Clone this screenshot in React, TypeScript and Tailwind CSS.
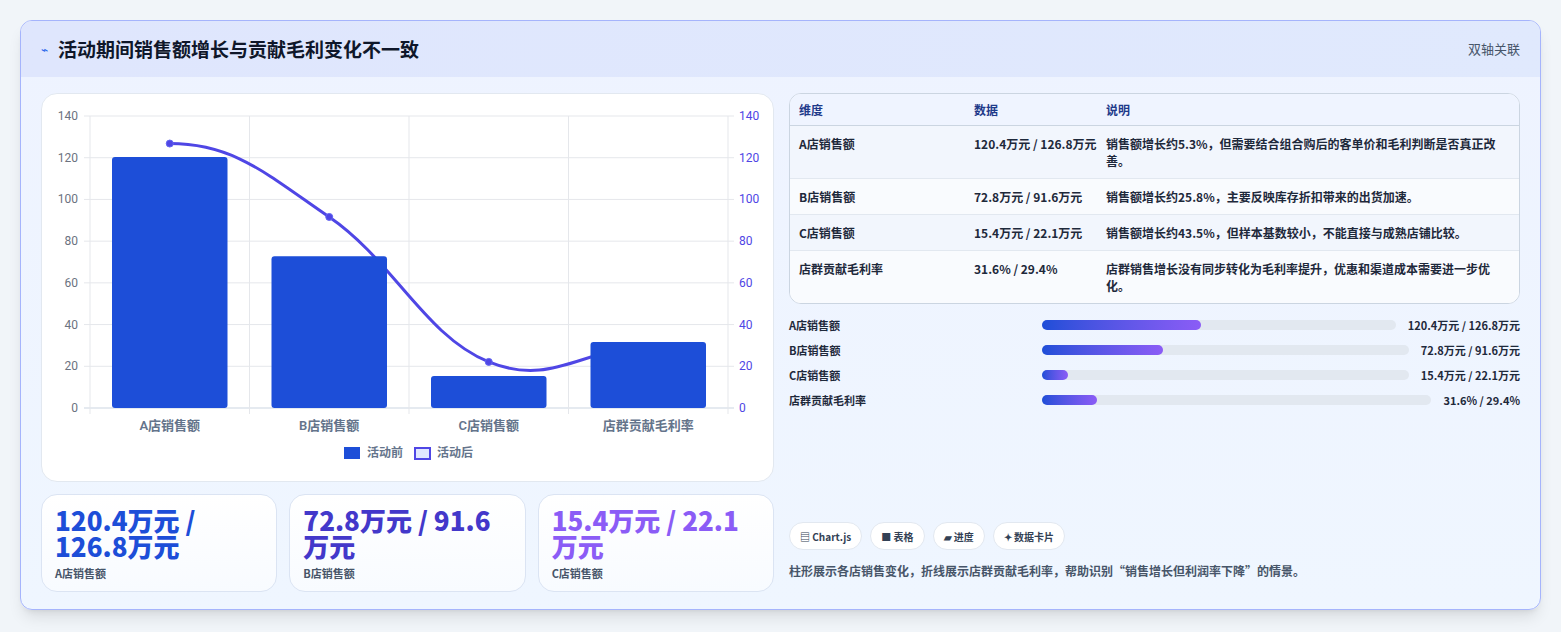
import React from 'react';

const cats = ['A店销售额', 'B店销售额', 'C店销售额', '店群贡献毛利率'];
const before = [120.4, 72.8, 15.4, 31.6];
const after = [126.8, 91.6, 22.1, 29.4];

const rows = [
  ['A店销售额', '120.4万元 / 126.8万元', '销售额增长约5.3%，但需要结合组合购后的客单价和毛利判断是否真正改善。'],
  ['B店销售额', '72.8万元 / 91.6万元', '销售额增长约25.8%，主要反映库存折扣带来的出货加速。'],
  ['C店销售额', '15.4万元 / 22.1万元', '销售额增长约43.5%，但样本基数较小，不能直接与成熟店铺比较。'],
  ['店群贡献毛利率', '31.6% / 29.4%', '店群销售增长没有同步转化为毛利率提升，优惠和渠道成本需要进一步优化。'],
];

const progress = [
  ['A店销售额', '120.4万元 / 126.8万元', 45],
  ['B店销售额', '72.8万元 / 91.6万元', 33],
  ['C店销售额', '15.4万元 / 22.1万元', 7],
  ['店群贡献毛利率', '31.6% / 29.4%', 14],
] as const;

const Chart = () => {
  const x0 = 48, x1 = 686, y0 = 22, y1 = 314;
  const cw = (x1 - x0) / 4;
  const y = (v: number) => y1 - (v / 140) * (y1 - y0);
  const pts = after.map((v, i) => [x0 + cw * (i + 0.5), y(v)]);
  let d = `M${pts[0][0]},${pts[0][1]}`;
  for (let i = 0; i < pts.length - 1; i++) {
    const [ax, ay] = pts[i];
    const [bx, by] = pts[i + 1];
    const dx = (bx - ax) * 0.4;
    const s0 = i === 0 ? 0 : (by - pts[i - 1][1]) / 2 * 0.4;
    const s1 = i + 2 < pts.length ? (pts[i + 2][1] - ay) / 2 * 0.4 : 0;
    d += ` C${ax + dx},${ay + s0} ${bx - dx},${by - s1} ${bx},${by}`;
  }
  const ticks = [0, 20, 40, 60, 80, 100, 120, 140];
  return (
    <svg width="733" height="388" className="block" style={{ fontFamily: 'Roboto, "Noto Sans CJK SC", sans-serif' }}>
      {ticks.map((t) => (
        <g key={t}>
          <line x1={x0 - 6} x2={x1 + 6} y1={y(t)} y2={y(t)} stroke={t === 0 ? '#cbd5e1' : '#e5e7eb'} />
          <text x={x0 - 12} y={y(t) + 4} textAnchor="end" fontSize="12" fill="#6b7280">{t}</text>
          <text x={x1 + 11} y={y(t) + 4} fontSize="12" fill="#4f46e5">{t}</text>
        </g>
      ))}
      {[0, 1, 2, 3, 4].map((i) => (
        <line key={i} x1={x0 + cw * i} x2={x0 + cw * i} y1={y0} y2={y1 + 6} stroke="#e5e7eb" />
      ))}
      <path d={d} fill="none" stroke="#4f46e5" strokeWidth="3" />
      {pts.map(([px, py], i) => (
        <circle key={i} cx={px} cy={py} r="3.5" fill="#4f46e5" stroke="#6366f1" strokeWidth="1" />
      ))}
      {before.map((v, i) => (
        <rect key={i} x={x0 + cw * i + 22} y={y(v)} width={cw - 44} height={y1 - y(v)} rx="3" fill="#1d4ed8" />
      ))}
      {cats.map((c, i) => (
        <text key={c} x={x0 + cw * (i + 0.5)} y={336} textAnchor="middle" fontSize="13" fontWeight="600" fill="#64748b">{c}</text>
      ))}
      <rect x="302" y="353" width="16" height="12" fill="#1d4ed8" />
      <text x="325" y="363" fontSize="12" fontWeight="600" fill="#64748b">活动前</text>
      <rect x="373" y="354" width="15" height="11" fill="#e0e7ff" stroke="#4f46e5" strokeWidth="2" />
      <text x="395" y="363" fontSize="12" fontWeight="600" fill="#64748b">活动后</text>
    </svg>
  );
};

export default function App() {
  return (
    <div className="w-[1561px] h-[632px] bg-[#f1f5f9] p-5 pb-0" style={{ fontFamily: '"Noto Sans CJK SC", "Noto Sans", sans-serif' }}>
      <div className="h-[590px] rounded-xl border border-[#a5b4fc] bg-gradient-to-b from-[#eef3ff] to-[#eff6ff] overflow-hidden shadow-lg">
        <div className="h-[56px] flex items-center justify-between px-5 bg-gradient-to-r from-[#dfe6fd] to-[#e0e9fd]">
          <div className="flex items-center gap-2.5">
            <span className="text-[#2563eb] text-xs">⌁</span>
            <span className="text-[19px] font-bold text-[#0f172a]">活动期间销售额增长与贡献毛利变化不一致</span>
          </div>
          <span className="text-[13px] text-[#475569]">双轴关联</span>
        </div>
        <div className="flex gap-[15px] px-5 pt-[16px]">
          <div className="w-[733px] flex flex-col gap-3">
            <div className="h-[389px] rounded-2xl bg-white border border-[#e2e8f0]"><Chart /></div>
            <div className="grid grid-cols-3 gap-3">
              {[
                ['120.4万元 / 126.8万元', 'A店销售额', 'text-[#1d4ed8]'],
                ['72.8万元 / 91.6万元', 'B店销售额', 'text-[#4338ca]'],
                ['15.4万元 / 22.1万元', 'C店销售额', 'text-[#8b5cf6]'],
              ].map(([v, l, c]) => (
                <div key={l} className="h-[98px] rounded-2xl bg-gradient-to-b from-white to-[#f8fbff] border border-[#dbe4f3] px-[13px] pt-[12px]">
                  <div className={`text-[26px] leading-[26px] font-extrabold pr-3 ${c}`}>{v}</div>
                  <div className="text-[11px] font-semibold text-[#475569] mt-[6px]">{l}</div>
                </div>
              ))}
            </div>
          </div>
          <div className="w-[733px] flex flex-col">
            <div className="rounded-xl border border-[#cbd5e1] bg-white overflow-hidden text-[12px] font-semibold text-[#1e293b]">
              <div className="flex h-[32px] items-center bg-[#eff4ff] border-b border-[#cbd5e1] font-bold text-[#1e3a8a]">
                <div className="w-[184px] pl-[9px]">维度</div>
                <div className="w-[132px]">数据</div>
                <div className="flex-1">说明</div>
              </div>
              {rows.map((r, i) => (
                <div key={r[0]} className={`flex py-[9px] leading-[17px] ${i % 2 === 0 ? 'bg-[#f2f6fd]' : 'bg-[#f9fbfe]'} ${i < 3 ? 'border-b border-[#e2e8f0]' : ''}`}>
                  <div className="w-[184px] pl-[9px]">{r[0]}</div>
                  <div className="w-[132px] pr-1">{r[1]}</div>
                  <div className="flex-1 pr-[22px]">{r[2]}</div>
                </div>
              ))}
            </div>
            <div className="flex flex-col gap-[7px] mt-[12px] text-[11px] font-bold text-[#1e293b]">
              {progress.map(([l, v, p]) => (
                <div key={l} className="flex items-center gap-2 h-[18px]">
                  <div className="w-[245px]">{l}</div>
                  <div className="flex-1 h-[10px] rounded-full bg-[#e2e8f0] mr-1">
                    <div className="h-full rounded-full bg-gradient-to-r from-[#1d4ed8] to-[#8b5cf6]" style={{ width: `${p}%` }} />
                  </div>
                  <div className="whitespace-nowrap">{v}</div>
                </div>
              ))}
            </div>
            <div className="mt-auto pb-[12px]">
              <div className="flex gap-2 text-[10px] font-bold text-[#334155]">
                {['▤ Chart.js', '■ 表格', '▰ 进度', '✦ 数据卡片'].map((t) => (
                  <span key={t} className="h-[28px] px-[10px] flex items-center rounded-full bg-white border border-[#e2e8f0]">{t}</span>
                ))}
              </div>
              <div className="mt-[12px] text-[12px] font-semibold text-[#475569]">柱形展示各店销售变化，折线展示店群贡献毛利率，帮助识别“销售增长但利润率下降”的情景。</div>
            </div>
          </div>
        </div>
      </div>
    </div>
  );
}
